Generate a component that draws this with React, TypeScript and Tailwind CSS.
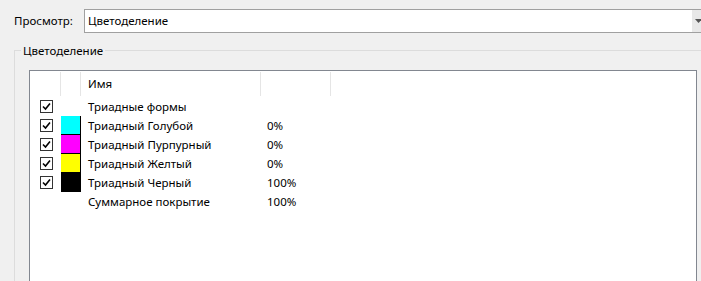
const rows = [
  { name: "Триадные формы", checked: true, swatch: null, value: "" },
  { name: "Триадный Голубой", checked: true, swatch: "bg-[#00ffff]", value: "0%" },
  { name: "Триадный Пурпурный", checked: true, swatch: "bg-[#ff00ff]", value: "0%" },
  { name: "Триадный Желтый", checked: true, swatch: "bg-[#ffff00]", value: "0%" },
  { name: "Триадный Черный", checked: true, swatch: "bg-black", value: "100%" },
  { name: "Суммарное покрытие", checked: false, swatch: null, value: "100%" },
];

function CheckBox() {
  return (
    <div className="w-[13px] h-[13px] border border-[#333] bg-white flex items-center justify-center">
      <svg width="9" height="9" viewBox="0 0 9 9">
        <path d="M1 4.5 L3.5 7 L8 1.5" stroke="#000" strokeWidth="1.6" fill="none" />
      </svg>
    </div>
  );
}

export default function App() {
  return (
    <div
      className="w-[701px] h-[281px] overflow-hidden bg-[#f0f0f0] text-[11.5px] text-black"
      style={{ fontFamily: '"Noto Sans", "Segoe UI", sans-serif' }}
    >
      {/* View selector */}
      <div className="flex items-center pt-[8px] h-[33px]">
        <div className="w-[84px] shrink-0 pl-[14px] leading-none">Просмотр:</div>
        <div className="flex h-[24px] w-[640px] shrink-0 border border-[#a0a0a0] bg-[#e8e8e8]">
          <div className="w-[607px] bg-white flex items-center pl-[3px]">Цветоделение</div>
          <div className="flex-1 flex items-center pl-[3px]">
            <svg width="7" height="4" viewBox="0 0 7 4">
              <path d="M0 0 L7 0 L3.5 4 Z" fill="#555" />
            </svg>
          </div>
        </div>
      </div>

      {/* Group box */}
      <div className="relative mt-[17px] ml-[14px] w-[720px] h-[300px] border-l border-t border-[#dcdcdc]">
        <div className="absolute -top-[8px] left-[6px] bg-[#f0f0f0] px-[2px] leading-[16px]">Цветоделение</div>
        <div className="ml-[14px] mt-[19px] w-[668px] h-[260px] border border-[#828790] bg-white">
          {/* Header */}
          <div className="flex h-[25px] pt-[1px]">
            <div className="w-[31px] border-r border-[#e5e5e5]" />
            <div className="w-[20px] border-r border-[#e5e5e5]" />
            <div className="w-[180px] border-r border-[#e5e5e5] pl-[7px] flex items-center">Имя</div>
            <div className="w-[70px] border-r border-[#e5e5e5]" />
          </div>
          {/* Rows */}
          <div className="flex flex-col mt-[1px]">
            {rows.map((r) => (
              <div key={r.name} className="flex h-[19px] items-center">
                <div className="w-[31px] flex justify-center pl-[2px]">
                  {r.checked && <CheckBox />}
                </div>
                <div className="w-[20px] h-[19px]">
                  {r.swatch && <div className={`w-[20px] h-[19px] border-r border-b border-black ${r.swatch}`} />}
                </div>
                <div className="w-[179px] pl-[7px]">{r.name}</div>
                <div className="pl-[7px]">{r.value}</div>
              </div>
            ))}
          </div>
        </div>
      </div>
    </div>
  );
}
